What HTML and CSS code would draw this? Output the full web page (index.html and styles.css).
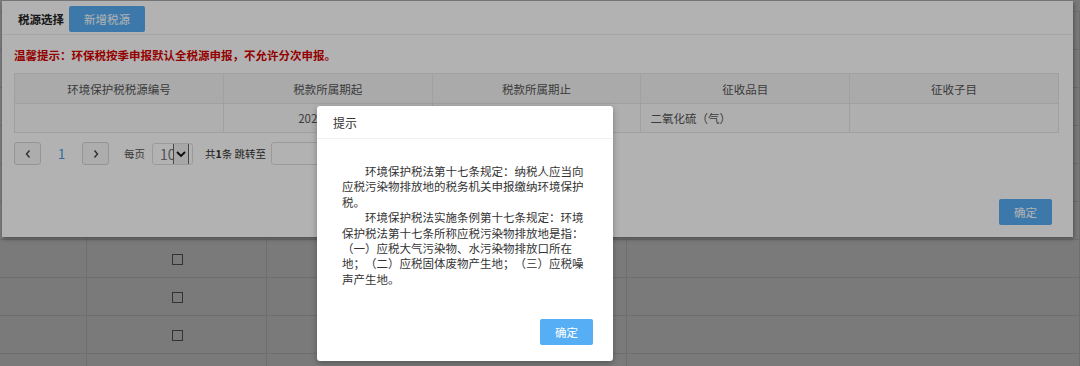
FILE: index.html
```html
<!DOCTYPE html>
<html lang="zh-CN">
<head>
    <meta charset="UTF-8">
    <meta name="viewport" content="width=device-width, initial-scale=1.0">
    <title>税源选择</title>
    <link rel="stylesheet" href="styles.css">
</head>
<body>

    <!-- 背景列表 -->
    <div class="bg-list">
        <div class="bg-row"><div></div><div><span class="check"></span></div><div></div><div></div></div>
        <div class="bg-row"><div></div><div><span class="check"></span></div><div></div><div></div></div>
        <div class="bg-row"><div></div><div><span class="check"></span></div><div></div><div></div></div>
        <div class="bg-row"><div></div><div><span class="check"></span></div><div></div><div></div></div>
        <div class="bg-row"><div></div><div><span class="check"></span></div><div></div><div></div></div>
        <div class="bg-row"><div></div><div><span class="check"></span></div><div></div><div></div></div>
        <div class="bg-row"><div></div><div><span class="check"></span></div><div></div><div></div></div>
        <div class="bg-row"><div></div><div><span class="check"></span></div><div></div><div></div></div>
        <div class="bg-row"><div></div><div><span class="check"></span></div><div></div><div></div></div>
        <div class="bg-row"><div></div><div></div><div></div><div></div></div>
    </div>

    <div class="mask"></div>

    <!-- 税源选择弹窗 -->
    <div class="dialog source-dialog">
        <div class="dialog-header">
            <span class="dialog-title">税源选择</span>
            <button class="btn btn-primary btn-add">新增税源</button>
        </div>

        <div class="dialog-body">
            <p class="warning">温馨提示：环保税按季申报默认全税源申报，不允许分次申报。</p>

            <table class="source-table">
                <thead>
                    <tr>
                        <th>环境保护税税源编号</th>
                        <th>税款所属期起</th>
                        <th>税款所属期止</th>
                        <th>征收品目</th>
                        <th>征收子目</th>
                    </tr>
                </thead>
                <tbody>
                    <tr>
                        <td></td>
                        <td>2021-01-01</td>
                        <td>2021-03-31</td>
                        <td class="text-left">二氧化硫（气）</td>
                        <td></td>
                    </tr>
                </tbody>
            </table>

            <!-- 分页 -->
            <div class="pager">
                <button class="page-btn">
                    <svg width="8" height="10" viewBox="0 0 8 10"><polyline points="5.5,1.5 2.5,5 5.5,8.5" fill="none" stroke="#444" stroke-width="1.4"/></svg>
                </button>
                <span class="page-num">1</span>
                <button class="page-btn">
                    <svg width="8" height="10" viewBox="0 0 8 10"><polyline points="2.5,1.5 5.5,5 2.5,8.5" fill="none" stroke="#444" stroke-width="1.4"/></svg>
                </button>
                <span class="page-label">每页</span>
                <div class="page-size">
                    <span class="size-value">10</span>
                    <span class="size-arrow">
                        <svg width="10" height="8" viewBox="0 0 10 8"><polyline points="1,2 5,6 9,2" fill="none" stroke="#111" stroke-width="1.8"/></svg>
                    </span>
                </div>
                <span class="page-total">共<b>1</b>条 跳转至</span>
                <input class="page-jump" type="text">
            </div>
        </div>

        <div class="dialog-footer">
            <button class="btn btn-primary btn-ok">确定</button>
        </div>
    </div>

    <div class="mask"></div>

    <!-- 提示弹窗 -->
    <div class="dialog tip-dialog">
        <div class="tip-header">提示</div>
        <div class="tip-body">
            <p>环境保护税法第十七条规定：纳税人应当向应税污染物排放地的税务机关申报缴纳环境保护税。</p>
            <p>环境保护税法实施条例第十七条规定：环境保护税法第十七条所称应税污染物排放地是指：（一）应税大气污染物、水污染物排放口所在地；（二）应税固体废物产生地；（三）应税噪声产生地。</p>
        </div>
        <div class="tip-footer">
            <button class="btn btn-primary btn-ok">确定</button>
        </div>
    </div>

</body>
</html>
```

FILE: styles.css
```css
/* GENEL */
* {
    margin: 0;
    padding: 0;
    box-sizing: border-box;
    font-family: "Noto Sans CJK SC", "Noto Sans", sans-serif;
    text-spacing-trim: space-all; /* tam genişlik noktalama */
}

body {
    width: 1080px;
    height: 366px;
    overflow: hidden;
    background-color: #fbfbfb;
    position: relative;
}

/* BACKGROUND LIST */
.bg-list {
    height: 366px;
    overflow: hidden;
    padding-top: 11px;
}

.bg-row {
    display: grid;
    grid-template-columns: 87px 180px 360px 1fr;
    height: 38px;
    border-top: 1px solid #e3e3e3;
}

.bg-row div {
    border-right: 1px solid #e3e3e3;
    display: flex;
    align-items: center;
    justify-content: center;
}

.check {
    width: 11px;
    height: 11px;
    border: 1px solid #6a6a6a;
    margin-left: 2px;
    margin-top: 1px;
}

/* MASK */
.mask {
    position: absolute;
    top: 0;
    left: 0;
    right: 0;
    bottom: 0;
    background-color: rgba(0, 0, 0, 0.3);
}

/* DIALOG */
.dialog {
    position: absolute;
    background-color: #fff;
    display: flex;
    flex-direction: column;
}

.source-dialog {
    left: 2px;
    top: 1px;
    width: 1071px;
    height: 236px;
    box-shadow: 1px 2px 4px rgba(0, 0, 0, 0.35);
}

.dialog-header {
    height: 34px;
    padding: 3px 16px 0;
    border-bottom: 1px solid #eeeeee;
    display: flex;
    align-items: center;
}

.dialog-title {
    font-size: 11.5px;
    font-weight: bold;
    color: #222;
}

/* BUTTONS */
.btn {
    border: none;
    border-radius: 2px;
    font-size: 11.5px;
    cursor: pointer;
}

.btn-primary {
    background-color: #56aef4;
    color: #fff;
}

.btn-add {
    margin-left: 5px;
    width: 76px;
    height: 26px;
}

.btn-ok {
    width: 53px;
    height: 26px;
}

/* DIALOG BODY */
.dialog-body {
    flex: 1;
    padding-left: 12px;
}

.warning {
    padding: 10px 0 0 0;
    line-height: 20px;
    font-size: 11.5px;
    font-weight: bold;
    color: #d40000;
}

.source-table {
    margin-top: 8px;
    width: 1045px;
    border-collapse: collapse;
    table-layout: fixed;
    font-size: 11.5px;
    color: #555;
}

.source-table th,
.source-table td {
    border: 1px solid #e6e6e6;
    font-weight: normal;
    text-align: center;
}

.source-table th {
    height: 30px;
    background-color: #f4f4f4;
}

.source-table td {
    height: 29px;
    background-color: #fbfbfb;
}

.source-table td.text-left {
    text-align: left;
    padding-left: 9px;
}

/* PAGER */
.pager {
    margin-top: 9px;
    display: flex;
    align-items: center;
    height: 23px;
    font-size: 10.5px;
    color: #555;
}

.page-btn {
    width: 27px;
    height: 23px;
    border: 1px solid #d6d6d6;
    border-radius: 3px;
    background-color: #f8f8f8;
    display: flex;
    align-items: center;
    justify-content: center;
}

.page-num {
    width: 41px;
    text-align: center;
    font-size: 13px;
    color: #4a9be0;
}

.page-label {
    margin-left: 15px;
}

.page-size {
    margin-left: 7px;
    width: 41px;
    height: 22px;
    border: 1px solid #dddddd;
    border-radius: 3px;
    display: flex;
    align-items: center;
    overflow: hidden;
}

.size-value {
    width: 20px;
    padding-left: 7px;
    font-size: 14px;
    color: #777;
    overflow: hidden;
    white-space: nowrap;
}

.size-arrow {
    width: 16px;
    height: 22px;
    border: 1px solid #666;
    display: flex;
    align-items: center;
    justify-content: center;
    background-color: #f0f0f0;
}

.page-total {
    margin-left: 12px;
    color: #333;
}

.page-jump {
    margin-left: 5px;
    width: 70px;
    height: 23px;
    border: 1px solid #dddddd;
    border-radius: 3px;
}

.dialog-footer {
    display: flex;
    justify-content: flex-end;
    padding: 0 21px 12px;
}

/* TIP DIALOG */
.tip-dialog {
    left: 317px;
    top: 106px;
    width: 296px;
    height: 255px;
    border-radius: 3px;
    box-shadow: 0 2px 6px rgba(0, 0, 0, 0.3);
}

.tip-header {
    height: 33px;
    padding-left: 16px;
    border-bottom: 1px solid #f0f0f0;
    display: flex;
    align-items: center;
    font-size: 12px;
    color: #333;
}

.tip-body {
    padding: 25px 29px 0 25px;
    font-size: 11.5px;
    line-height: 15.4px;
    color: #333;
}

.tip-body p {
    text-indent: 2em;
}

.tip-footer {
    margin-top: auto;
    display: flex;
    justify-content: flex-end;
    padding: 0 20px 16px;
}
```
